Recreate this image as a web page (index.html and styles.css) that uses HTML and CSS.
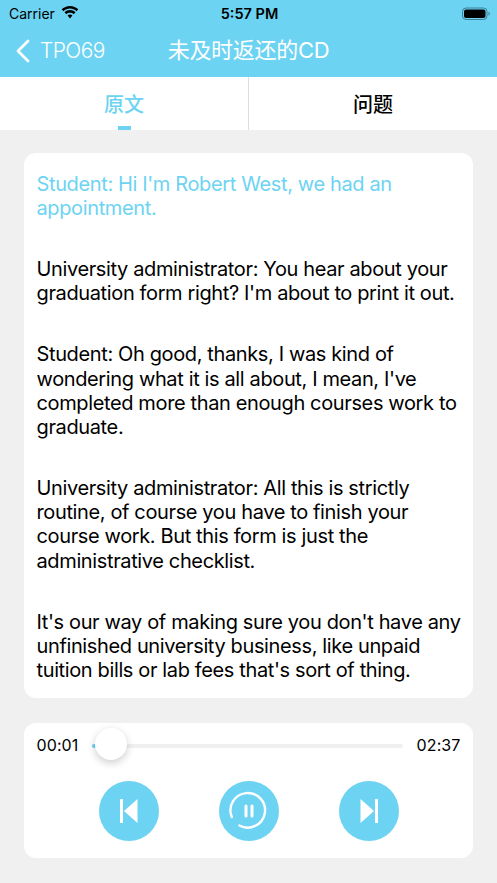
FILE: index.html
```html
<!DOCTYPE html>
<html lang="zh">
<head>
    <meta charset="UTF-8">
    <meta name="viewport" content="width=device-width, initial-scale=1.0">
    <title>未及时返还的CD</title>
    <link rel="stylesheet" href="styles.css">
</head>
<body>
    <div class="app">
        <header class="top">
            <div class="status">
                <div class="status-left">
                    <span class="carrier">Carrier</span>
                    <svg class="wifi" width="18" height="13" viewBox="0 0 18 13">
                        <path d="M9 2.600c2.500 0 4.800 1 6.500 2.600l1.800-1.900C15.200 1.300 12.200 0 9 0S2.800 1.300.7 3.300l1.800 1.900C4.200 3.600 6.500 2.600 9 2.600z"/>
                        <path d="M9 6.800c1.400 0 2.700.5 3.700 1.400l1.800-1.900C13 4.900 11.100 4.100 9 4.100S5 4.900 3.500 6.300l1.800 1.900c1-.9 2.300-1.400 3.700-1.400z"/>
                        <path d="M9 8.500c-1 0-1.800.4-2.400.9L9 12.500l2.400-3.100C10.800 8.900 10 8.500 9 8.500z"/>
                    </svg>
                </div>
                <span class="clock">5:57 PM</span>
                <div class="status-right">
                    <svg width="28" height="13" viewBox="0 0 28 13">
                        <rect x=".5" y="1" width="24.500" height="11.500" rx="3.500" fill="none" stroke="#3d7f96" stroke-width="1"/>
                        <rect x="2" y="2.500" width="21.500" height="8.500" rx="2" fill="#000"/>
                        <path d="M26.500 4.800c.8.300 1.200 1 1.200 1.900s-.4 1.600-1.200 1.900z" fill="#3d7f96"/>
                    </svg>
                </div>
            </div>
            <nav class="navbar">
                <a class="back" href="javascript:;">
                    <svg width="15" height="24" viewBox="0 0 15 24">
                        <path d="M13 2 3 12l10 10" fill="none" stroke="#fff" stroke-width="2.800" stroke-linecap="round" stroke-linejoin="round"/>
                    </svg>
                    <span>TPO69</span>
                </a>
                <h1>未及时返还的CD</h1>
                <div></div>
            </nav>
        </header>

        <div class="tabs">
            <div class="tab active">原文</div>
            <div class="tab">问题</div>
        </div>

        <main class="content">
            <section class="card article">
                <p class="current">Student: Hi I'm Robert West, we had an appointment.</p>
                <p>University administrator: You hear about your graduation form right? I'm about to print it out.</p>
                <p>Student: Oh good, thanks, I was kind of wondering what it is all about, I mean, I've completed more than enough courses work to graduate.</p>
                <p>University administrator: All this is strictly routine, of course you have to finish your course work. But this form is just the administrative checklist.</p>
                <p>It's our way of making sure you don't have any unfinished university business, like unpaid tuition bills or lab fees that's sort of thing.</p>
            </section>

            <section class="card player">
                <div class="progress">
                    <span class="time">00:01</span>
                    <div class="track">
                        <div class="played"></div>
                        <div class="thumb"></div>
                    </div>
                    <span class="time">02:37</span>
                </div>
                <div class="controls">
                    <button type="button">
                        <svg width="60" height="60" viewBox="0 0 60 60">
                            <rect x="21" y="18" width="3" height="24" rx=".5" fill="#fff"/>
                            <path d="M38.500 18v24L25 30z" fill="#fff"/>
                        </svg>
                    </button>
                    <button type="button">
                        <svg width="60" height="60" viewBox="0 0 60 60">
                            <path d="M12.800 36A17.300 17.300 0 1 1 20.500 44.500" fill="none" stroke="#fff" stroke-width="2.400" stroke-linecap="round"/>
                            <rect x="25.500" y="23.500" width="3" height="13" rx="1.500" fill="#fff"/>
                            <rect x="31.500" y="23.500" width="3" height="13" rx="1.500" fill="#fff"/>
                        </svg>
                    </button>
                    <button type="button">
                        <svg width="60" height="60" viewBox="0 0 60 60">
                            <path d="M21.500 18v24L35 30z" fill="#fff"/>
                            <rect x="36" y="18" width="3" height="24" rx=".5" fill="#fff"/>
                        </svg>
                    </button>
                </div>
            </section>
        </main>
    </div>
</body>
</html>
```
FILE: styles.css
```css
* {
    box-sizing: border-box;
    margin: 0;
    padding: 0;
}
html, body {
    height: 100%;
}
body {
    background-color: #f0f0f0;
    font-family: "Inter", "Noto Sans CJK SC", sans-serif;
    color: #000;
}
a {
    color: inherit;
    text-decoration: none;
}
.app {
    display: flex;
    flex-direction: column;
    height: 883px;
}
.top {
    height: 77px;
    background-color: #6dd3f2;
}
.status {
    display: grid;
    grid-template-columns: 1fr auto 1fr;
    align-items: center;
    height: 26px;
    padding: 0 7px 0 9px;
    font-size: 14px;
}
.status-left {
    display: flex;
    align-items: center;
    gap: 6px;
}
.wifi {
    margin-top: -2px;
}
.clock {
    font-size: 14.500px;
    font-weight: 600;
}
.status-right {
    display: flex;
    justify-content: flex-end;
}
.navbar {
    display: grid;
    grid-template-columns: 1fr auto 1fr;
    align-items: center;
    height: 49px;
    padding: 0 15px;
    color: #fff;
}
.back {
    display: flex;
    align-items: center;
    gap: 10px;
    font-size: 21px;
    font-weight: 300;
    letter-spacing: -0.600px;
}
.navbar h1 {
    margin-bottom: 5px;
    font-size: 22px;
    font-weight: 400;
    letter-spacing: -0.300px;
}
.tabs {
    display: flex;
    height: 53px;
    background-color: #fff;
}
.tab {
    position: relative;
    flex: 1;
    display: flex;
    align-items: center;
    justify-content: center;
    padding-bottom: 1px;
    font-size: 20px;
    font-weight: 500;
}
.tab + .tab {
    border-left: 1px solid #ddd;
}
.tab.active {
    color: #6dd3f2;
}
.tab.active::after {
    content: "";
    position: absolute;
    left: 50%;
    bottom: 0;
    width: 13px;
    height: 4px;
    margin-left: -6.500px;
    background-color: #6dd3f2;
}
.content {
    flex: 1;
    display: flex;
    flex-direction: column;
    gap: 25px;
    padding: 23px 24px 25px;
}
.card {
    background-color: #fff;
    border-radius: 12px;
}
.article {
    display: flex;
    flex-direction: column;
    gap: 36.800px;
    height: 545px;
    padding: 19px 12px 0 12.500px;
    font-size: 20px;
    line-height: 24.200px;
    letter-spacing: -0.370px;
}
.current {
    color: #6dd3f2;
}
.player {
    height: 135px;
    padding: 0 12.500px;
}
.progress {
    display: flex;
    align-items: center;
    gap: 14px;
    height: 44px;
}
.time {
    font-size: 16px;
    letter-spacing: 0.100px;
}
.track {
    position: relative;
    flex: 1;
    height: 4px;
    margin-top: 2px;
    border-radius: 2px;
    background-color: #f0f0f0;
}
.played {
    width: 4px;
    height: 100%;
    border-radius: 2px;
    background-color: #6dd3f2;
}
.thumb {
    position: absolute;
    left: 2.500px;
    top: -16px;
    width: 32px;
    height: 32px;
    border-radius: 50%;
    background-color: #fff;
    box-shadow: 0 3px 8px rgba(0, 0, 0, 0.2);
}
.controls {
    display: flex;
    justify-content: center;
    gap: 60px;
    margin-top: 14px;
}
.controls button {
    display: flex;
    width: 60px;
    height: 60px;
    border: none;
    border-radius: 50%;
    background-color: #6dd3f2;
}
```
